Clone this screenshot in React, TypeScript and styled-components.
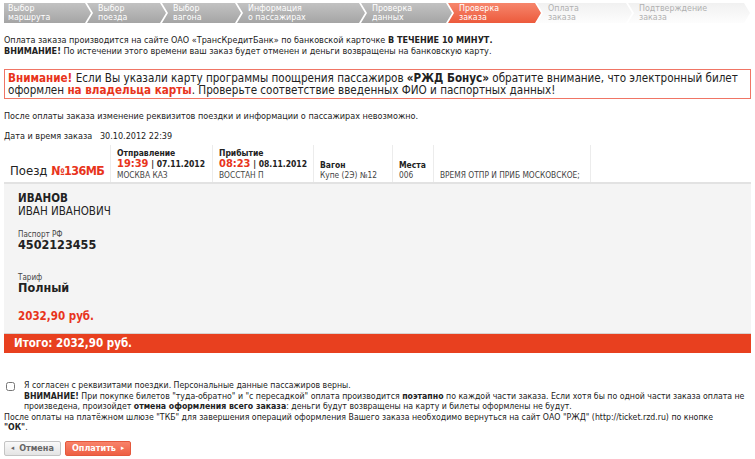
import styled, { createGlobalStyle } from 'styled-components';

const font = '"DejaVu Sans Condensed", "DejaVu Sans", Verdana, sans-serif';

const GlobalStyle = createGlobalStyle`
  body {
    margin: 0;
    background: #fff;
    color: #222;
    font-family: ${font};
  }
`;

type StepState = 'done' | 'active' | 'next';

const steps: { title: string[]; state: StepState; width: number }[] = [
  { title: ['Выбор', 'маршрута'], state: 'done', width: 87 },
  { title: ['Выбор', 'поезда'], state: 'done', width: 79 },
  { title: ['Выбор', 'вагона'], state: 'done', width: 79 },
  { title: ['Информация', 'о пассажирах'], state: 'done', width: 128 },
  { title: ['Проверка', 'данных'], state: 'done', width: 91 },
  { title: ['Проверка', 'заказа'], state: 'active', width: 93 },
  { title: ['Оплата', 'заказа'], state: 'next', width: 95 },
  { title: ['Подтверждение', 'заказа'], state: 'next', width: 122 },
];

const stepBg: Record<StepState, string> = {
  done: 'linear-gradient(#c2c2c2, #a5a5a5)',
  active: 'linear-gradient(#f6866c, #ec5a3c)',
  next: 'linear-gradient(#f1f1f1, #fdfdfd)',
};

const App = () => {
  return (
    <Page>
      <GlobalStyle />
      <StepsBar>
        {steps.map((s, i) => (
          <Step key={i} $state={s.state} $first={i === 0} $w={s.width}>
            {s.title[0]}
            <br />
            {s.title[1]}
          </Step>
        ))}
      </StepsBar>

      <Notice>
        Оплата заказа производится на сайте ОАО «ТрансКредитБанк» по банковской карточке <b>В ТЕЧЕНИЕ 10 МИНУТ.</b>
        <br />
        <b>ВНИМАНИЕ!</b> По истечении этого времени ваш заказ будет отменен и деньги возвращены на банковскую карту.
      </Notice>

      <Warning>
        <Red>Внимание!</Red> Если Вы указали карту программы поощрения пассажиров <b>«РЖД Бонус»</b> обратите внимание, что
        электронный билет оформлен <Red>на владельца карты</Red>. Проверьте соответствие введенных ФИО и паспортных данных!
      </Warning>

      <Note>После оплаты заказа изменение реквизитов поездки и информации о пассажирах невозможно.</Note>
      <OrderDate>Дата и время заказа&nbsp;&nbsp; 30.10.2012 22:39</OrderDate>

      <TrainRow>
        <TrainTitle>
          Поезд&nbsp;<TrainNo>№136МБ</TrainNo>
        </TrainTitle>
        <Cell $w={102}>
          <CellLabel>Отправление</CellLabel>
          <When>
            <Time>19:39</Time> | 07.11.2012
          </When>
          <CellValue>МОСКВА КАЗ</CellValue>
        </Cell>
        <Cell $w={101}>
          <CellLabel>Прибытие</CellLabel>
          <When>
            <Time>08:23</Time> | 08.11.2012
          </When>
          <CellValue>ВОССТАН П</CellValue>
        </Cell>
        <Cell $w={79}>
          <CellLabel>Вагон</CellLabel>
          <CellValue>Купе (2Э) №12</CellValue>
        </Cell>
        <Cell $w={41}>
          <CellLabel>Места</CellLabel>
          <CellValue>006</CellValue>
        </Cell>
        <Cell $w={157}>
          <CellValue>ВРЕМЯ ОТПР И ПРИБ МОСКОВСКОЕ;</CellValue>
        </Cell>
        <Cell $w={0} />
      </TrainRow>

      <Passenger>
        <Surname>ИВАНОВ</Surname>
        <GivenName>ИВАН ИВАНОВИЧ</GivenName>
        <FieldLabel $top={12}>Паспорт РФ</FieldLabel>
        <FieldValue>4502123455</FieldValue>
        <FieldLabel $top={22}>Тариф</FieldLabel>
        <FieldValue>Полный</FieldValue>
        <Price>2032,90 руб.</Price>
      </Passenger>
      <Total>Итого: 2032,90 руб.</Total>

      <Agreement>
        <CheckRow>
          <Check type="checkbox" />
          <div>
            Я согласен с реквизитами поездки. Персональные данные пассажиров верны.
            <br />
            <b>ВНИМАНИЕ!</b> При покупке билетов "туда-обратно" и "с пересадкой" оплата производится <b>поэтапно</b> по
            каждой части заказа. Если хотя бы по одной части заказа оплата не произведена, произойдет{' '}
            <b>отмена оформления всего заказа</b>: деньги будут возвращены на карту и билеты оформлены не будут.
          </div>
        </CheckRow>
        После оплаты на платёжном шлюзе "ТКБ" для завершения операций оформления Вашего заказа необходимо вернуться на
        сайт ОАО "РЖД" (http://ticket.rzd.ru) по кнопке
        <br />
        <b>"ОК"</b>.
      </Agreement>

      <Buttons>
        <Button $kind="cancel">
          <Arrow>◂</Arrow>Отмена
        </Button>
        <Button $kind="pay">
          Оплатить<Arrow>▸</Arrow>
        </Button>
      </Buttons>
    </Page>
  );
};

export default App;

const Page = styled.div`
  width: 747px;
  padding: 3px 4px;
`;

const StepsBar = styled.div`
  display: flex;
  height: 20px;
`;

const Step = styled.div<{ $state: StepState; $first: boolean; $w: number }>`
  flex: 0 0 ${(p) => p.$w}px;
  margin-left: ${(p) => (p.$first ? 0 : -4)}px;
  padding: 1px 0 0 ${(p) => (p.$first ? 4 : 11)}px;
  box-sizing: border-box;
  background: ${(p) => stepBg[p.$state]};
  color: ${(p) => (p.$state === 'next' ? '#b0b0b0' : '#fff')};
  font-size: 8.8px;
  line-height: 9px;
  clip-path: ${(p) =>
    p.$first
      ? 'polygon(0 0, calc(100% - 6px) 0, 100% 50%, calc(100% - 6px) 100%, 0 100%)'
      : 'polygon(0 0, calc(100% - 6px) 0, 100% 50%, calc(100% - 6px) 100%, 0 100%, 6px 50%)'};
`;

const Notice = styled.div`
  margin-top: 12px;
  font-size: 9px;
  line-height: 11px;
`;

const Warning = styled.div`
  margin-top: 12px;
  border: 1px solid #f07565;
  padding: 2px 3px;
  font-size: 11.6px;
  line-height: 12px;
`;

const Red = styled.b`
  color: #e8341c;
`;

const Note = styled.div`
  margin-top: 12px;
  font-size: 9px;
  line-height: 11px;
`;

const OrderDate = styled.div`
  margin-top: 9px;
  font-size: 9px;
  line-height: 11px;
`;

const TrainRow = styled.div`
  display: flex;
  height: 37px;
  margin-top: 3px;
  border-bottom: 2px solid #e2e2e2;
`;

const TrainTitle = styled.div`
  flex: 0 0 106px;
  min-width: 0;
  box-sizing: border-box;
  padding: 0 0 4px 6px;
  display: flex;
  align-items: flex-end;
  font-size: 13px;
  white-space: nowrap;
`;

const TrainNo = styled.b`
  color: #e8341c;
  font-size: 12.5px;
  letter-spacing: -0.6px;
`;

const Cell = styled.div<{ $w: number }>`
  flex: ${(p) => (p.$w ? `0 0 ${p.$w}px` : '1')};
  min-width: 0;
  box-sizing: border-box;
  border-left: 1px solid #ececec;
  padding: 0 0 2px 6px;
  display: flex;
  flex-direction: column;
  justify-content: flex-end;
  white-space: nowrap;
`;

const CellLabel = styled.div`
  font-size: 8.5px;
  font-weight: bold;
  line-height: 10px;
`;

const When = styled.div`
  font-size: 8.5px;
  font-weight: bold;
  line-height: 11px;
`;

const Time = styled.span`
  color: #e8341c;
  font-size: 11px;
`;

const CellValue = styled.div`
  font-size: 8.3px;
  line-height: 10px;
  color: #444;
`;

const Passenger = styled.div`
  background: #f4f4f4;
  padding: 8px 14px 10px;
`;

const Surname = styled.div`
  font-size: 11.5px;
  font-weight: bold;
  line-height: 13px;
`;

const GivenName = styled.div`
  font-size: 11.5px;
  line-height: 13px;
`;

const FieldLabel = styled.div<{ $top: number }>`
  margin-top: ${(p) => p.$top}px;
  font-size: 8px;
  line-height: 9px;
  color: #444;
`;

const FieldValue = styled.div`
  font-size: 12.5px;
  font-weight: bold;
  line-height: 12px;
`;

const Price = styled.div`
  margin-top: 16px;
  font-size: 11.5px;
  font-weight: bold;
  color: #e8341c;
  line-height: 13px;
`;

const Total = styled.div`
  background: #e8401f;
  border-top: 1px solid #d8d2d0;
  color: #fff;
  font-size: 11.5px;
  font-weight: bold;
  line-height: 19px;
  padding-left: 10px;
`;

const Agreement = styled.div`
  margin-top: 27px;
  font-size: 8.7px;
  line-height: 10.5px;
`;

const CheckRow = styled.div`
  display: flex;
  gap: 9px;
  padding-left: 2px;
`;

const Check = styled.input`
  margin: 2px 0 0;
  width: 9px;
  height: 9px;
  flex: 0 0 9px;
`;

const Buttons = styled.div`
  display: flex;
  gap: 4px;
  margin-top: 8px;
`;

const Button = styled.button<{ $kind: 'cancel' | 'pay' }>`
  height: 15px;
  padding: 0 6px;
  border-radius: 2px;
  font-family: ${font};
  font-size: 9px;
  font-weight: bold;
  display: flex;
  align-items: center;
  gap: 5px;
  border: 1px solid ${(p) => (p.$kind === 'pay' ? '#e4583c' : '#c4c4c4')};
  background: ${(p) =>
    p.$kind === 'pay' ? 'linear-gradient(#f8836a, #ee5f43)' : 'linear-gradient(#fafafa, #e4e4e4)'};
  color: ${(p) => (p.$kind === 'pay' ? '#fff' : '#666')};
`;

const Arrow = styled.span`
  font-size: 7px;
  font-weight: normal;
`;
